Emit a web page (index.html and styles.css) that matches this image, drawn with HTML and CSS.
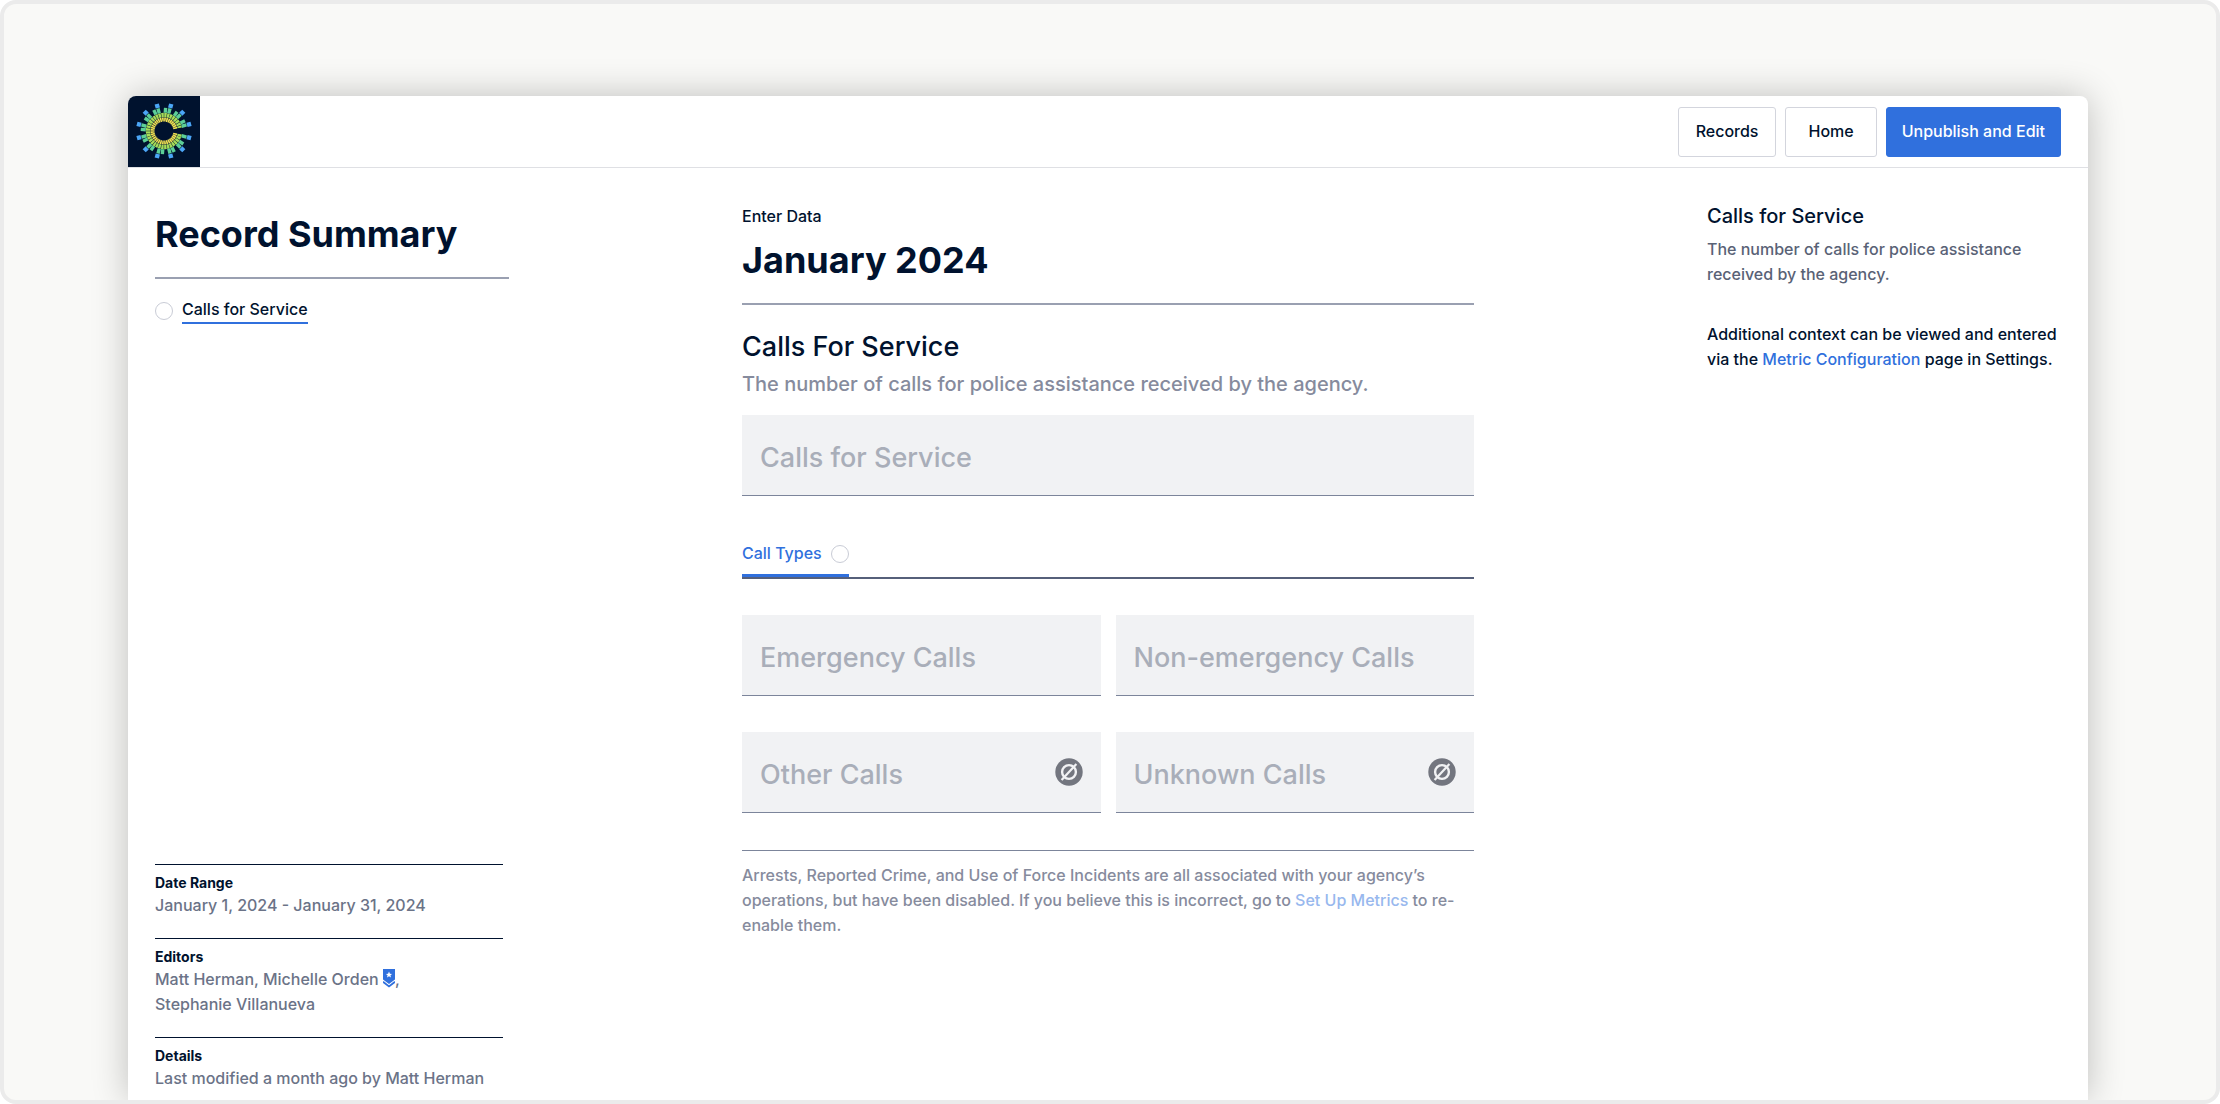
FILE: index.html
```html
<!DOCTYPE html>
<html lang="en">
<head>
<meta charset="utf-8">
<title>Record Summary</title>
<link rel="stylesheet" href="styles.css">
</head>
<body>
<div class="stage">
  <div class="window">
    <header class="topbar">
      <a class="logo" href="#" aria-label="Dashboard">
        <svg viewBox="-36 -35 72 71" width="72" height="71" aria-hidden="true">
          <defs>
            <g id="pair"><rect x="23.8" y="-2.2" width="4.2" height="4.4" fill="#4ba6f7"/><rect x="18.3" y="-1.7" width="5" height="3.4" fill="#5ccf97"/><rect x="18.3" y="-1.7" width="5" height="3.4" fill="#5ccf97" transform="rotate(-11)"/></g>
          </defs>
          <path d="M11.29 2.19A11.5 11.5 0 1 1 11.29 -2.19" pathLength="338" stroke-dasharray="8 2" fill="none" stroke="#f0e152" stroke-width="4"/>
          <path d="M15.71 3.05A16 16 0 1 1 15.71 -3.05" pathLength="338" stroke-dasharray="8.4 1.6" fill="none" stroke="#a6dc58" stroke-width="4.4"/>
          <g transform="rotate(15)"><rect x="23.8" y="-2.2" width="4.2" height="4.4" fill="#4ba6f7"/><rect x="18.3" y="-1.7" width="5" height="3.4" fill="#5ccf97"/></g>
          <use href="#pair" transform="rotate(45)"/>
          <use href="#pair" transform="rotate(75)"/>
          <use href="#pair" transform="rotate(105)"/>
          <use href="#pair" transform="rotate(135)"/>
          <use href="#pair" transform="rotate(165)"/>
          <use href="#pair" transform="rotate(195)"/>
          <use href="#pair" transform="rotate(225)"/>
          <use href="#pair" transform="rotate(255)"/>
          <use href="#pair" transform="rotate(285)"/>
          <use href="#pair" transform="rotate(315)"/>
          <use href="#pair" transform="rotate(345)"/>
        </svg>
      </a>
      <nav class="actions">
        <button class="btn" type="button">Records</button>
        <button class="btn btn-home" type="button">Home</button>
        <button class="btn btn-primary" type="button">Unpublish and Edit</button>
      </nav>
    </header>

    <div class="columns">
      <aside class="summary">
        <div>
          <h1 class="title summary-title">Record Summary</h1>
          <a class="metric" href="#calls"><span class="dot"></span><span class="metric-name">Calls for Service</span></a>
        </div>
        <dl class="facts">
          <div class="fact">
            <dt>Date Range</dt>
            <dd>January 1, 2024 - January 31, 2024</dd>
          </div>
          <div class="fact">
            <dt>Editors</dt>
            <dd>Matt Herman, Michelle Orden <svg class="badge" viewBox="0 0 12 19" width="12" height="19" aria-hidden="true"><path d="M0 0H12V10.5L6 15L0 10.5Z" fill="#3070dd"/><path d="M0 12.8L6 17.4L12 12.8" fill="none" stroke="#3070dd" stroke-width="1.8"/><path d="M6 2.6L6.9 4.7L9.1 4.9L7.4 6.3L8 8.5L6 7.3L4 8.5L4.6 6.3L2.9 4.9L5.1 4.7Z" fill="#fff"/></svg>,<br>Stephanie Villanueva</dd>
          </div>
          <div class="fact">
            <dt>Details</dt>
            <dd>Last modified a month ago by Matt Herman</dd>
          </div>
        </dl>
      </aside>

      <main class="entry" id="calls">
        <p class="eyebrow">Enter Data</p>
        <h1 class="title entry-title">January 2024</h1>
        <h2 class="section-title">Calls For Service</h2>
        <p class="section-text">The number of calls for police assistance received by the agency.</p>
        <div class="field"><input type="text" placeholder="Calls for Service" aria-label="Calls for Service"></div>
        <div class="tabs"><button class="tab" type="button">Call Types<span class="dot"></span></button></div>
        <div class="fields">
          <div class="field"><input type="text" placeholder="Emergency Calls" aria-label="Emergency Calls"></div>
          <div class="field"><input type="text" placeholder="Non-emergency Calls" aria-label="Non-emergency Calls"></div>
          <div class="field"><input type="text" placeholder="Other Calls" aria-label="Other Calls">
            <svg class="disabled" viewBox="0 0 28 28" width="28" height="28" aria-hidden="true"><circle cx="14" cy="14" r="13.7" fill="#73767f"/><circle cx="14" cy="14" r="6.9" fill="none" stroke="#f1f2f4" stroke-width="2.4"/><path d="M6.6 21.9L21.4 6.1" stroke="#f1f2f4" stroke-width="2.2"/></svg></div>
          <div class="field"><input type="text" placeholder="Unknown Calls" aria-label="Unknown Calls">
            <svg class="disabled" viewBox="0 0 28 28" width="28" height="28" aria-hidden="true"><circle cx="14" cy="14" r="13.7" fill="#73767f"/><circle cx="14" cy="14" r="6.9" fill="none" stroke="#f1f2f4" stroke-width="2.4"/><path d="M6.6 21.9L21.4 6.1" stroke="#f1f2f4" stroke-width="2.2"/></svg></div>
        </div>
        <p class="note">Arrests, Reported Crime, and Use of Force Incidents are all associated with your agency’s operations, but have been disabled. If you believe this is incorrect, go to <a href="#">Set Up Metrics</a> to re-enable them.</p>
      </main>

      <aside class="help">
        <h2 class="help-title">Calls for Service</h2>
        <p class="help-text">The number of calls for police assistance received by the agency.</p>
        <p class="help-context">Additional context can be viewed and entered via the <a href="#">Metric Configuration</a> page in Settings.</p>
      </aside>
    </div>
  </div>
</div>
</body>
</html>
```
FILE: styles.css
```css
* { box-sizing: border-box; }

body {
  margin: 0;
  background: #fff;
  color: #00122e;
  font: 500 16px/25px Inter, "Liberation Sans", sans-serif;
}

h1, h2, p, dl, dd { margin: 0; }
a { color: #3070dd; text-decoration: none; }
button { font: inherit; cursor: pointer; }

.stage {
  display: flex;
  min-height: 100vh;
  padding: 92px 128px 0 124px;
  border: 4px solid #ebebeb;
  border-radius: 16px;
  background: #f9f9f7;
  overflow: hidden;
}

.window {
  display: flex;
  flex: 1;
  flex-direction: column;
  min-width: 0;
  border-radius: 8px 8px 0 0;
  background: #fff;
  box-shadow: 0 0 36px rgba(0, 0, 0, 0.24);
}

.topbar {
  display: flex;
  align-items: center;
  justify-content: space-between;
  padding-right: 27px;
  border-bottom: 1px solid #dfe0e4;
}

.logo {
  display: flex;
  border-top-left-radius: 8px;
  background: #00122e;
}

.actions { display: flex; gap: 9px; }

.btn {
  height: 50px;
  padding: 0 17px;
  border: 1px solid #d3d5dd;
  border-radius: 3px;
  background: #fff;
  color: #00122e;
}

.btn-home { padding: 0 22px; }

.btn-primary {
  padding: 0 15px;
  border-color: #3070dd;
  background: #3070dd;
  color: #fff;
}

.columns {
  display: grid;
  flex: 1;
  grid-template-columns: minmax(0, 1fr) minmax(0, 732px) minmax(0, 1fr);
}

.title {
  font-size: 36px;
  font-weight: 700;
  line-height: 44px;
}

.summary {
  display: flex;
  flex-direction: column;
  justify-content: space-between;
  max-width: 381px;
  padding: 44px 0 9px 27px;
}

.summary-title {
  padding-bottom: 21px;
  border-bottom: 2px solid #9aa0b1;
}

.metric {
  display: flex;
  gap: 9px;
  align-items: center;
  margin-top: 18px;
  color: #00122e;
}

.metric-name { border-bottom: 2px solid #3070dd; }

.dot {
  width: 18px;
  height: 18px;
  border: 1px solid #c9ccd6;
  border-radius: 50%;
}

.facts {
  display: flex;
  flex-direction: column;
  gap: 20px;
  margin-right: 6px;
}

.fact {
  padding-top: 8px;
  border-top: 1px solid #00122e;
}

.fact dt {
  font-size: 14px;
  font-weight: 700;
  line-height: 20px;
}

.fact dd { color: #6b7387; }
.badge { vertical-align: -3px; }

.entry { padding: 36px 0 40px; }

.entry-title {
  margin-top: 9px;
  padding-bottom: 21px;
  border-bottom: 2px solid #9aa0b1;
}

.section-title {
  margin-top: 25px;
  font-size: 27px;
  font-weight: 500;
  line-height: 34px;
}

.section-text {
  margin: 8px 0 18px;
  color: #868b9d;
  font-size: 20px;
}

.field {
  display: flex;
  align-items: center;
  height: 81px;
  padding: 0 18px;
  border-bottom: 1px solid #7c859b;
  background: #f1f2f4;
}

.field input {
  flex: 1;
  min-width: 0;
  padding: 6px 0 0;
  border: 0;
  outline: 0;
  background: none;
  color: #00122e;
  font: inherit;
  font-size: 27px;
  line-height: 34px;
}

.field input::placeholder { color: #a9aeb9; opacity: 1; }

.tabs {
  display: flex;
  margin: 42px 0 36px;
  border-bottom: 2px solid #56607a;
}

.tab {
  display: flex;
  gap: 9px;
  align-items: center;
  padding: 3px 0 8px;
  border: 0;
  border-bottom: 3px solid #3070dd;
  background: none;
  color: #3070dd;
}

.fields {
  display: grid;
  grid-template-columns: minmax(0, 1fr) minmax(0, 1fr);
  gap: 36px 15px;
}

.note {
  margin-top: 37px;
  padding-top: 12px;
  border-top: 1px solid #7c859b;
  color: #868b9d;
}

.note a { color: #98b8ee; }

.help {
  justify-self: end;
  max-width: 381px;
  padding: 36px 27px 0 0;
}

.help-title {
  font-size: 20px;
  font-weight: 500;
  line-height: 25px;
}

.help-text {
  margin: 8px 0 35px;
  color: #596276;
}
```
